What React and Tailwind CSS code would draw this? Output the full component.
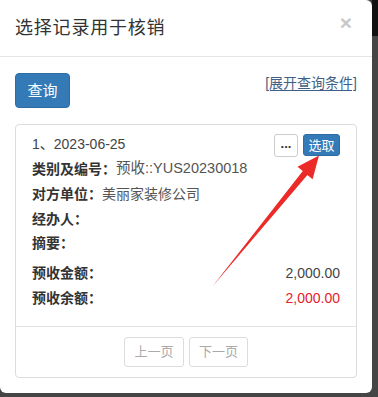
export default function App() {
  const font = { fontFamily: '"Liberation Sans", "Noto Sans CJK SC", Arial, sans-serif' };
  return (
    <div className="relative w-[378px] h-[397px] overflow-hidden bg-[#454545]" style={font}>
      <div className="absolute right-0 top-0 w-[6px] h-[36px] bg-[#111]" />
      <div className="relative w-[372px] h-[393px] bg-white rounded-tr-[6px] rounded-b-[6px] flex flex-col">
        {/* header */}
        <div className="h-[57px] border-b border-[#e5e5e5] flex items-center justify-between pl-[15px] pr-[20px]">
          <div className="text-[18px] text-[#333] leading-none tracking-[0.8px]">选择记录用于核销</div>
          <div className="text-[21px] font-bold text-[#c8c8c8] leading-none -mt-[12px]">×</div>
        </div>
        {/* body */}
        <div className="flex-1 px-[15px] pt-[16px] pb-[15px] flex flex-col">
          <div className="flex justify-between items-start">
            <button className="w-[55px] h-[35px] rounded-[4px] bg-[#337ab7] border border-[#2e6da4] text-white text-[15px] leading-none">查询</button>
            <a className="mt-[0px] text-[14px] text-[#3f5f86] underline underline-offset-2 leading-[20px]">[展开查询条件]</a>
          </div>
          <div className="mt-[16px] flex-1 border border-[#dcdcdc] rounded-[4px] flex flex-col">
            <div className="px-[16px] pt-[8px] pb-[15px] border-b border-[#e2e2e2] text-[14px] text-[#333]">
              <div className="flex justify-between items-center h-[23px]">
                <span className="text-[#444]">1、2023-06-25</span>
                <div className="flex gap-[5px] mt-[2px]">
                  <div className="w-[24px] h-[23px] border border-[#ccc] rounded-[3px] bg-white flex items-center justify-center text-[13px] font-bold text-[#333] leading-none pb-[4px]">...</div>
                  <div className="w-[37px] h-[22px] rounded-[3px] bg-[#337ab7] border border-[#2e6da4] text-white text-[13px] flex items-center justify-center leading-none">选取</div>
                </div>
              </div>
              <div className="h-[24px] mt-[1px] flex items-center"><b className="font-bold">类别及编号：</b><span className="text-[#555] text-[14.5px]">预收::YUS20230018</span></div>
              <div className="h-[25px] mt-[1px] flex items-center"><b className="font-bold">对方单位：</b><span className="text-[#555]">美丽家装修公司</span></div>
              <div className="h-[24px] flex items-center"><b className="font-bold">经办人：</b></div>
              <div className="h-[24px] flex items-center"><b className="font-bold">摘要：</b></div>
              <div className="h-[25px] mt-[6px] flex items-center justify-between"><b className="font-bold">预收金额：</b><span className="text-[#444]">2,000.00</span></div>
              <div className="h-[25px] flex items-center justify-between"><b className="font-bold">预收余额：</b><span className="text-[#e8202a]">2,000.00</span></div>
            </div>
            <div className="flex-1 flex items-start justify-center gap-[5px] pt-[10px]">
              <div className="w-[60px] h-[30px] border border-[#ddd] rounded-[3px] text-[13px] text-[#aaa] flex items-center justify-center">上一页</div>
              <div className="w-[59px] h-[30px] border border-[#ddd] rounded-[3px] text-[13px] text-[#aaa] flex items-center justify-center">下一页</div>
            </div>
          </div>
        </div>
      </div>
      {/* red arrow annotation */}
      <svg className="absolute left-0 top-0 pointer-events-none" width="378" height="397">
        <polygon
          points="212,287 302.8,171.1 297.5,166.8 319,155.5 312.6,179.2 307.4,174.9"
          fill="#ec2a28"
        />
      </svg>
    </div>
  );
}
